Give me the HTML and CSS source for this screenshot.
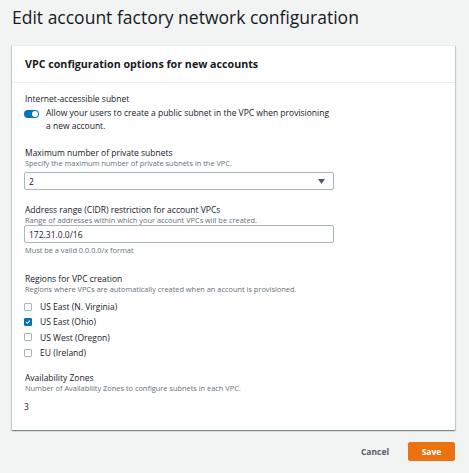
FILE: index.html
```html
<!DOCTYPE html>
<html lang="en">
<head>
<meta charset="utf-8">
<title>Edit account factory network configuration</title>
<link rel="stylesheet" href="styles.css">
</head>
<body>
<div class="page">
  <h1 class="title">Edit account factory network configuration</h1>
  <section class="card">
    <header class="card-header">VPC configuration options for new accounts</header>
    <div class="card-body">
      <div class="field f-internet">
        <div class="label">Internet-accessible subnet</div>
        <div class="toggle-row">
          <span class="toggle"><span class="knob"></span></span>
          <span class="toggle-text">Allow your users to create a public subnet in the VPC when provisioning a new account.</span>
        </div>
      </div>
      <div class="field f-max">
        <div class="label">Maximum number of private subnets</div>
        <div class="desc">Specify the maximum number of private subnets in the VPC.</div>
        <div class="select">
          <span class="value">2</span>
          <svg class="caret" width="7" height="5" viewBox="0 0 7 5"><path d="M0 0h7L3.5 5z" fill="#545b64"/></svg>
        </div>
      </div>
      <div class="field f-cidr">
        <div class="label">Address range (CIDR) restriction for account VPCs</div>
        <div class="desc">Range of addresses within which your account VPCs will be created.</div>
        <div class="input">172.31.0.0/16</div>
        <div class="hint">Must be a valid 0.0.0.0/x format</div>
      </div>
      <div class="field f-regions">
        <div class="label">Regions for VPC creation</div>
        <div class="desc">Regions where VPCs are automatically created when an account is provisioned.</div>
        <ul class="checks">
          <li><span class="box"></span>US East (N. Virginia)</li>
          <li><span class="box checked"><svg width="8" height="8" viewBox="0 0 8 8"><path d="M1.6 4.1 3.3 5.8 6.5 2.2" fill="none" stroke="#fff" stroke-width="1.4"/></svg></span>US East (Ohio)</li>
          <li><span class="box"></span>US West (Oregon)</li>
          <li><span class="box"></span>EU (Ireland)</li>
        </ul>
      </div>
      <div class="field f-az">
        <div class="label">Availability Zones</div>
        <div class="desc">Number of Availability Zones to configure subnets in each VPC.</div>
        <div class="az-value">3</div>
      </div>
    </div>
  </section>
  <div class="actions">
    <button class="btn-link">Cancel</button>
    <button class="btn-primary">Save</button>
  </div>
</div>
</body>
</html>
```

FILE: styles.css
```css
* { box-sizing: border-box; }
html, body { margin: 0; padding: 0; }
body {
  background: #f2f3f3;
  font-family: "Open Sans", "Noto Sans", sans-serif;
  color: #16191f;
  width: 469px;
  height: 473px;
  overflow: hidden;
}
.page {
  padding: 0 14px 0 12px;
}
.title {
  margin: 0;
  padding-top: 5px;
  font-size: 17.5px;
  line-height: 24px;
  font-weight: 400;
  color: #16191f;
  height: 45px;
  white-space: nowrap;
}
.card {
  background: #fff;
  border-top: 1px solid #eaeded;
  box-shadow: 0 1px 1px 0 rgba(0,28,36,.3), 1px 1px 1px 0 rgba(0,28,36,.15), -1px 1px 1px 0 rgba(0,28,36,.15);
}
.card-header {
  padding: 11px 13px 0;
  height: 37px;
  font-size: 10.7px;
  line-height: 14px;
  font-weight: 700;
  border-bottom: 1px solid #eaeded;
  white-space: nowrap;
}
.card-body {
  padding: 9px 13px 17px 12px;
}
.label {
  font-size: 8.5px;
  line-height: 12px;
  padding-left: 1px;
  white-space: nowrap;
}
.desc, .hint {
  font-size: 7.4px;
  line-height: 9px;
  color: #687078;
  padding-left: 1px;
  white-space: nowrap;
}
.f-internet .label { line-height: 14px; }
.toggle-row {
  display: flex;
  align-items: flex-start;
  margin-top: 2px;
}
.toggle {
  flex: none;
  width: 15px;
  height: 8px;
  border-radius: 4px;
  background: #0073bb;
  margin-top: 2px;
  display: flex;
  justify-content: flex-end;
  align-items: center;
  padding-right: 1px;
}
.knob {
  width: 6px;
  height: 6px;
  border-radius: 50%;
  background: #fff;
}
.toggle-text {
  margin-left: 7px;
  font-size: 8.5px;
  line-height: 13px;
  margin-top: -2px;
  width: 287px;
}
.f-max { margin-top: 15px; }
.select {
  margin-top: 4px;
  width: 310px;
  height: 18px;
  border: 1px solid #aab7b8;
  border-radius: 2px;
  display: flex;
  align-items: center;
  justify-content: space-between;
  padding: 0 8px 0 4px;
  font-size: 8.5px;
}
.f-cidr { margin-top: 14px; }
.input {
  margin-top: 0;
  width: 310px;
  height: 18px;
  border: 1px solid #aab7b8;
  border-radius: 2px;
  display: flex;
  align-items: center;
  padding: 0 4px;
  font-size: 8.5px;
}
.hint { margin-top: 3px; }
.f-regions { margin-top: 18px; }
.checks {
  list-style: none;
  margin: 5px 0 0;
  padding: 0;
}
.checks li {
  display: flex;
  align-items: center;
  height: 15.3px;
  font-size: 8.5px;
}
.box {
  width: 8px;
  height: 8px;
  border: 1px solid #aab7b8;
  border-radius: 1px;
  margin-right: 8px;
  display: flex;
  align-items: center;
  justify-content: center;
}
.box.checked {
  background: #0073bb;
  border-color: #0073bb;
}
.box svg { display: block; }
.f-az { margin-top: 12px; }
.az-value {
  margin-top: 8px;
  font-size: 8.5px;
  line-height: 12px;
}
.actions {
  display: flex;
  justify-content: flex-end;
  align-items: center;
  margin-top: 12px;
}
.btn-link {
  background: none;
  border: none;
  font-family: inherit;
  font-weight: 700;
  font-size: 8.5px;
  color: #545b64;
  padding: 0;
  margin-right: 19px;
}
.btn-primary {
  width: 47px;
  height: 19px;
  background: #ec7211;
  border: 1px solid #ec7211;
  border-radius: 2px;
  color: #fff;
  font-family: inherit;
  font-weight: 700;
  font-size: 8.5px;
  padding: 0;
}
```
